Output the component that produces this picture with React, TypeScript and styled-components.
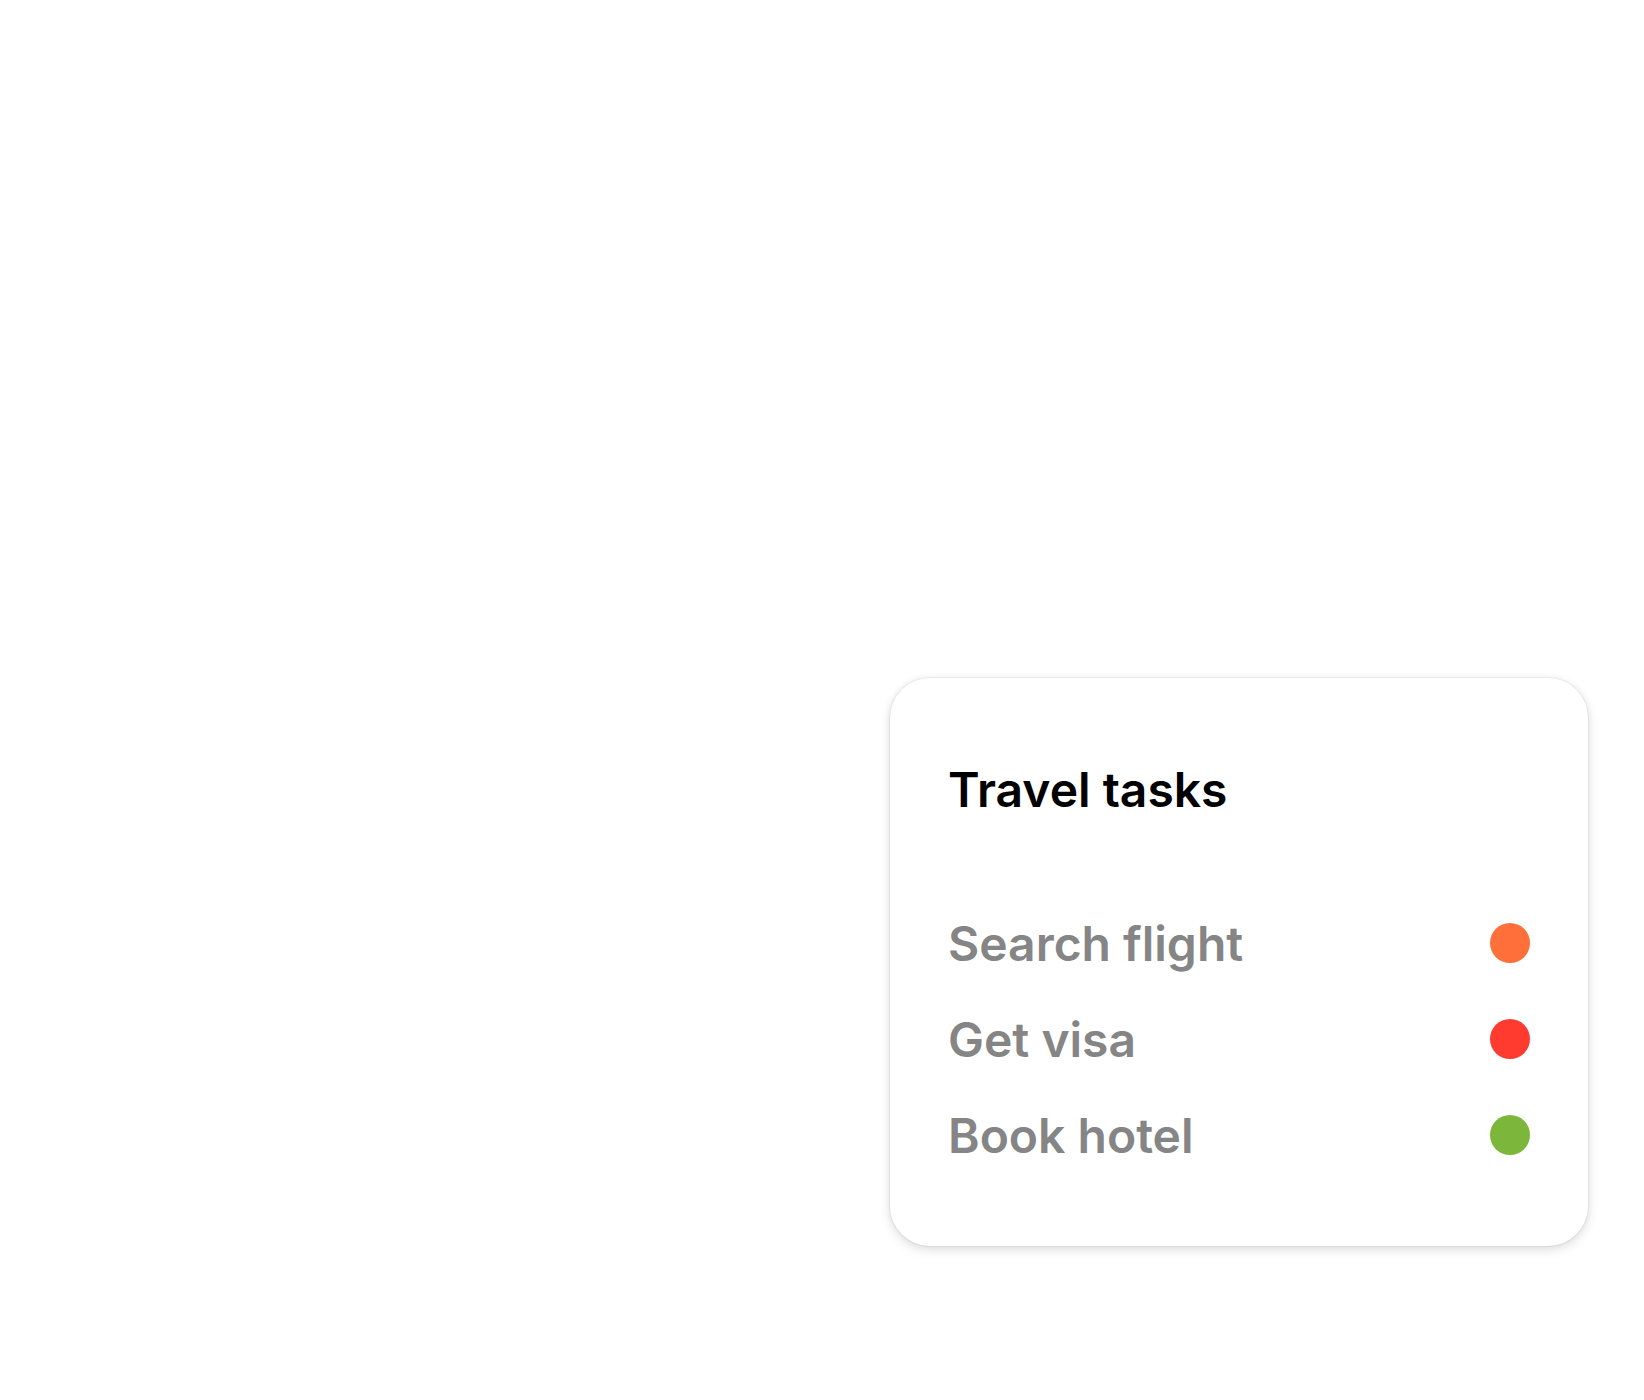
import React from 'react';
import styled, { createGlobalStyle } from 'styled-components';

const GlobalStyle = createGlobalStyle`
  body {
    margin: 0;
    background: #ffffff;
    font-family: Inter, "Noto Sans", sans-serif;
  }
`;

const Page = styled.div`
  min-height: 1400px;
  display: flex;
  justify-content: flex-end;
  align-items: flex-start;
  padding: 678px 56px 0 0;
  box-sizing: border-box;
`;

const Card = styled.section`
  width: 698px;
  height: 568px;
  box-sizing: border-box;
  padding: 82px 58px 63px 58px;
  background: #ffffff;
  border-radius: 40px;
  box-shadow: 0 0 0 1px rgba(0, 0, 0, 0.035), 0 0 6px rgba(0, 0, 0, 0.06),
    0 4px 12px rgba(0, 0, 0, 0.12);
  display: flex;
  flex-direction: column;
`;

const Title = styled.h2`
  margin: 0 0 75px;
  font-size: 48px;
  line-height: 60px;
  font-weight: 600;
  color: #000000;
`;

const TaskList = styled.ul`
  list-style: none;
  margin: 0;
  padding: 0;
`;

const TaskRow = styled.li`
  height: 96px;
  display: flex;
  align-items: center;
  justify-content: space-between;
`;

const TaskName = styled.span`
  font-size: 48px;
  font-weight: 600;
  color: #858585;
`;

const Dot = styled.span<{ $color: string }>`
  width: 40px;
  height: 40px;
  border-radius: 50%;
  background: ${({ $color }) => $color};
  flex-shrink: 0;
`;

const tasks = [
  { name: 'Search flight', color: '#ff6f3a' },
  { name: 'Get visa', color: '#ff3a2f' },
  { name: 'Book hotel', color: '#7cb63a' },
];

const App: React.FC = () => {
  return (
    <>
      <GlobalStyle />
      <Page>
        <Card>
          <Title>Travel tasks</Title>
          <TaskList>
            {tasks.map((task) => (
              <TaskRow key={task.name}>
                <TaskName>{task.name}</TaskName>
                <Dot $color={task.color} />
              </TaskRow>
            ))}
          </TaskList>
        </Card>
      </Page>
    </>
  );
};

export default App;
